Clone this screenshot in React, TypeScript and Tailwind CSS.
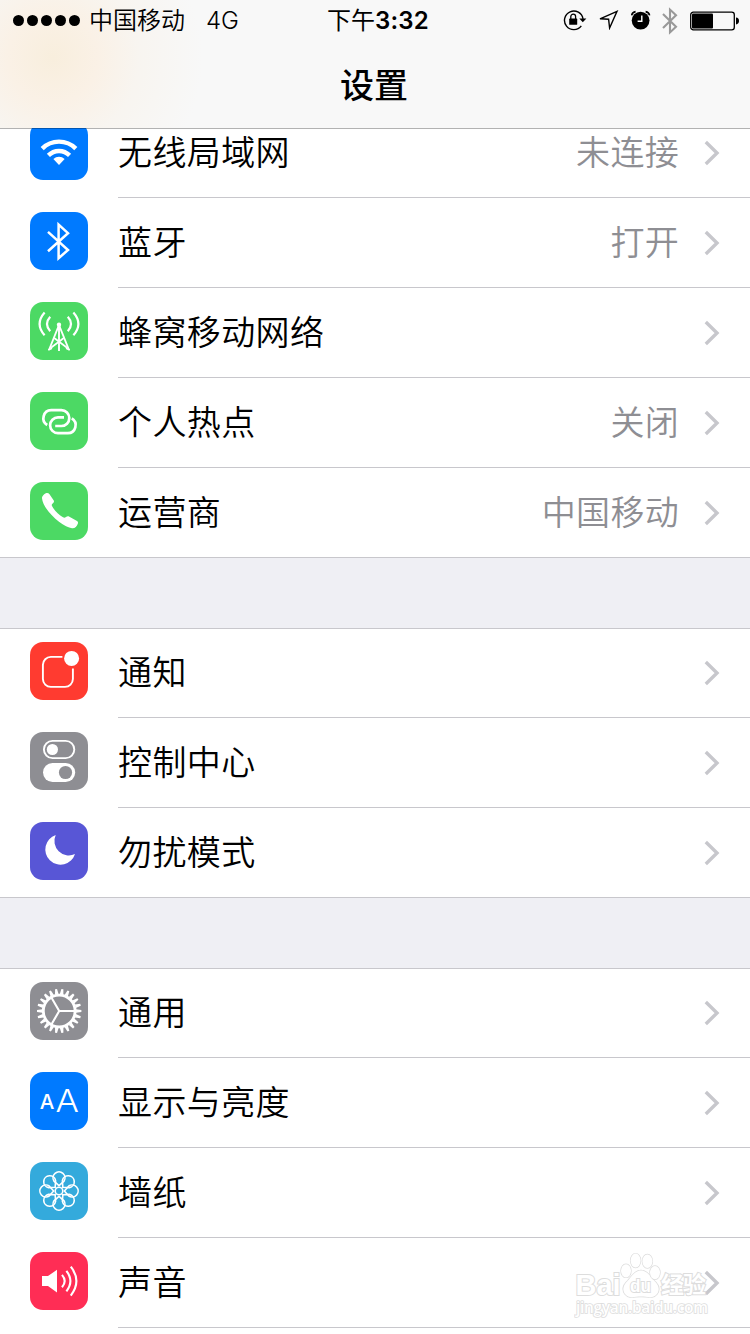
import React from 'react';

const FONT = 'font-["Inter","Noto_Sans_CJK_SC",sans-serif]';

type Row = {
  label: string;
  value?: string;
  color: string;
  icon: React.ReactNode;
};

const WifiIcon = (
  <g fill="none" stroke="#fff" strokeWidth="4.4">
    <path d="M12.2 26.6A23.8 23.8 0 0 1 45.8 26.6" />
    <path d="M18.4 33.4A14.8 14.8 0 0 1 39.6 33.4" />
    <path d="M29 43L23.4 37A8.4 8.4 0 0 1 34.6 37Z" fill="#fff" stroke="none" />
  </g>
);

const BluetoothIcon = (
  <path d="M18 19.8L38 38L28.6 46.2V12.6L38 21.2L18 39.2" fill="none" stroke="#fff" strokeWidth="2.5" />
);

const CellularIcon = (
  <g fill="none" stroke="#fff" strokeWidth="1.9">
    <circle cx="29" cy="22.8" r="2.2" fill="#fff" stroke="none" />
    <path d="M20.2 14.8Q13.8 22 20.2 29.2M37.8 14.8Q44.2 22 37.8 29.2" strokeWidth="2.2" />
    <path d="M14.6 10.4Q4.6 21.8 14.6 33.2M43.4 10.4Q53.4 21.8 43.4 33.2" strokeWidth="2.2" />
    <path d="M29 23V49M28.6 24L19 48M29.4 24L39 48" />
    <path d="M24.2 36L37.4 46M33.8 36L20.6 46M18.2 48L22 46.2M39.8 48L36 46.2" strokeWidth="1.7" />
  </g>
);

const HotspotIcon = (
  <g fill="none" stroke="#fff" strokeWidth="2.7">
    <path d="M17.2 33A8 8 0 0 1 21.2 18.2H31.4A7.9 7.9 0 0 1 31.4 34H25.2" />
    <path d="M34 25.4H28A7.9 7.9 0 0 0 28 41.2H37.8A8 8 0 0 0 41.8 26.4" />
  </g>
);

const PhoneIcon = (
  <path
    d="M12 16.2C12 14 14.5 11.3 16.6 11C17.8 10.8 18.8 11.2 19.5 12.2L23.6 18.2C24.3 19.3 24 20.2 23.2 21C22.2 22 21.3 22.6 22 24C24.2 28.4 28.8 32.8 33 35.3C34.3 36.1 35 35.7 36 35C37 34.2 38.1 33.9 39.4 34.7L46.6 38.7C47.9 39.4 48.3 40.3 47.8 41.7C46.9 44.4 44.8 46.5 42 46.2C33.4 45.6 13 28.4 12 16.2Z"
    fill="#fff"
  />
);

const NotificationIcon = (
  <>
    <path d="M32.4 14.9H20.8A8 8 0 0 0 12.9 22.8V37A8 8 0 0 0 20.8 44.9H35A8 8 0 0 0 42.9 37V26.4" fill="none" stroke="#fff" strokeWidth="1.9" />
    <circle cx="41.6" cy="16.4" r="7.5" fill="#fff" />
  </>
);

const ControlIcon = (
  <>
    <rect x="13.9" y="8.9" width="30.4" height="17.2" rx="8.6" fill="none" stroke="#fff" strokeWidth="1.9" />
    <circle cx="22.4" cy="17.5" r="5.6" fill="#fff" />
    <rect x="13" y="31" width="32.2" height="19" rx="9.5" fill="#fff" />
    <circle cx="35.5" cy="40.5" r="6.6" fill="#8e8e93" />
  </>
);

const MoonIcon = <path d="M25.7 13A15.2 15.2 0 1 0 45 32A14.4 14.4 0 0 1 25.7 13Z" fill="#fff" />;

const TEETH = Array.from({ length: 22 }, (_, i) => 90 + (i * 360) / 22);

const GearIcon = (
  <g transform="translate(29.2 29)" fill="none" stroke="#fff">
    <circle r="15.9" strokeWidth="2.8" />
    {TEETH.map((a) => (
      <path key={a} d="M-1.8 -16.8L-1 -22.2H1L1.8 -16.8Z" fill="#fff" stroke="none" transform={`rotate(${a})`} />
    ))}
    <path d="M0 0H15M0 0L-7.8 -13.5M0 0L-7.8 13.5" strokeWidth="2.1" />
  </g>
);

const DisplayIcon = (
  <g fill="#fff" className='font-["Inter",sans-serif]'>
    <text x="9.8" y="36.8" fontSize="20.4" fontWeight="500" textLength="14.6" lengthAdjust="spacingAndGlyphs">A</text>
    <text x="25.6" y="39.8" fontSize="31" fontWeight="350" textLength="23.4" lengthAdjust="spacingAndGlyphs">A</text>
  </g>
);

const PETALS = [0, 45, 90, 135, 180, 225, 270, 315];

const WallpaperIcon = (
  <g transform="translate(29 29)" fill="none" stroke="#fff" strokeWidth="1.6">
    <circle r="3.8" />
    {PETALS.map((a) => (
      <path key={a} d="M0 -5.4L-5 -9.8A6 6 0 1 1 5 -9.8Z" transform={`rotate(${a})`} />
    ))}
  </g>
);

const SoundIcon = (
  <>
    <path d="M12 24H18L27 17.8V40.4L18 34H12Z" fill="#fff" />
    <path d="M32 22.9Q37.4 29.1 32 35.3M36.4 18.8Q44.4 29.1 36.4 39.4M40.8 14.6Q52 29.1 40.8 43.6" fill="none" stroke="#fff" strokeWidth="2.1" />
  </>
);

const groups: Row[][] = [
  [
    { label: '无线局域网', value: '未连接', color: 'bg-[#007aff]', icon: WifiIcon },
    { label: '蓝牙', value: '打开', color: 'bg-[#007aff]', icon: BluetoothIcon },
    { label: '蜂窝移动网络', color: 'bg-[#4cd964]', icon: CellularIcon },
    { label: '个人热点', value: '关闭', color: 'bg-[#4cd964]', icon: HotspotIcon },
    { label: '运营商', value: '中国移动', color: 'bg-[#4cd964]', icon: PhoneIcon },
  ],
  [
    { label: '通知', color: 'bg-[#ff3b30]', icon: NotificationIcon },
    { label: '控制中心', color: 'bg-[#8e8e93]', icon: ControlIcon },
    { label: '勿扰模式', color: 'bg-[#5856d6]', icon: MoonIcon },
  ],
  [
    { label: '通用', color: 'bg-[#8e8e93]', icon: GearIcon },
    { label: '显示与亮度', color: 'bg-[#007aff]', icon: DisplayIcon },
    { label: '墙纸', color: 'bg-[#34aadc]', icon: WallpaperIcon },
    { label: '声音', color: 'bg-[#ff2d55]', icon: SoundIcon },
  ],
];

function SettingsRow({ row, last }: { row: Row; last: boolean }) {
  return (
    <div className="flex h-[90px] pl-[30px]">
      <div className={`mt-[14px] mr-[30px] h-[58px] w-[58px] shrink-0 overflow-hidden rounded-[13px] ${row.color}`}>
        <svg viewBox="0 0 58 58" className="h-full w-full">{row.icon}</svg>
      </div>
      <div className={`flex flex-1 items-center border-b pr-[30px] ${last ? 'border-transparent' : 'border-[#c8c7cc]'}`}>
        <span className="flex-1 text-[34px] font-[350] leading-[48px] tracking-[0.4px] text-black">{row.label}</span>
        {row.value && <span className="mr-[25px] text-[34px] font-[350] leading-[48px] tracking-[0.3px] text-[#8e8e93]">{row.value}</span>}
        <svg viewBox="0 0 16 26" className="h-[26px] w-[16px]">
          <path d="M1.8 2L13 13L1.8 24" fill="none" stroke="#c7c7cc" strokeWidth="3.4" />
        </svg>
      </div>
    </div>
  );
}

function StatusBar() {
  return (
    <div className="grid h-[40px] grid-cols-[1fr_auto_1fr] items-center pl-[13px] pr-[11px] text-[24px] leading-[40px] text-black">
      <div className="flex items-center">
        <div className="flex gap-[3px]">
          {[0, 1, 2, 3, 4].map((i) => (
            <span key={i} className="h-[11px] w-[11px] rounded-full bg-black" />
          ))}
        </div>
        <span className="ml-[9px] mt-px font-[350]">中国移动</span>
        <span className="ml-[21px] mt-px font-[350]">4G</span>
      </div>
      <div className="ml-[4px] mt-px font-normal">
        下午<span className="font-semibold tracking-[0.2px]">3:32</span>
      </div>
      <div className="-mt-px flex items-center justify-end">
        <svg viewBox="0 0 24 22" className="mr-[12px] h-[22px] w-[24px]">
          <path d="M18.3 16.8A9.3 9.3 0 1 1 20 10" fill="none" stroke="#000" strokeWidth="1.4" />
          <path d="M16.3 9.6H23.4L19.8 13.2Z" />
          <rect x="6.2" y="9.6" width="8" height="6.2" rx="0.6" />
          <path d="M7.8 10V7.6A2.4 2.4 0 0 1 12.6 7.6V10" fill="none" stroke="#000" strokeWidth="1.3" />
        </svg>
        <svg viewBox="0 0 20 20" className="mr-[12px] h-[20px] w-[20px]">
          <path d="M18 1.4L1 8.8L9.6 9.2L10.6 18Z" fill="none" stroke="#000" strokeWidth="1.4" />
        </svg>
        <svg viewBox="0 0 20 20" className="mr-[11px] h-[20px] w-[20px]">
          <circle cx="9.6" cy="10.6" r="8.9" />
          <path d="M10.8 5.6V11.2H6.6" fill="none" stroke="#fff" strokeWidth="1.4" />
          <path d="M0.6 5.4Q1.2 2.2 4.6 1.6M18.6 5.4Q18 2.2 14.6 1.6" fill="none" stroke="#000" strokeWidth="1.6" />
        </svg>
        <svg viewBox="0 0 16 28" className="mr-[12px] mt-[1px] h-[28px] w-[16px]">
          <path d="M1 7L14 19.8L8 25.4V2.6L14 8.2L1 21" fill="none" stroke="#999" strokeWidth="2.1" />
        </svg>
        <svg viewBox="0 0 49 20" className="mt-px h-[20px] w-[49px]">
          <rect x="0.7" y="1.2" width="43.6" height="17.6" rx="2.6" fill="none" stroke="#000" strokeWidth="1.3" />
          <rect x="2" y="2.6" width="21" height="14.8" rx="1" />
          <path d="M46 6.6Q49 7 49 10Q49 13 46 13.4Z" />
        </svg>
      </div>
    </div>
  );
}

function Watermark() {
  return (
    <svg viewBox="0 0 140 68" className="absolute left-[574px] top-[1250px] h-[68px] w-[140px] opacity-90">
      <g fill="#fff" stroke="#dadada" strokeWidth="2" paintOrder="stroke">
        <text x="1.5" y="45" fontSize="29" fontWeight="700" textLength="45" className='font-["Liberation_Sans",sans-serif]'>Bai</text>
        <g strokeWidth="1.4">
          <path d="M67 20.5C73 20.5 76 26 80 30.5C85 35 86 40 83 44C79 49 74 46.5 67 46.5C60 46.5 55 49 51 44C48 40 49 35 54 30.5C58 26 61 20.5 67 20.5Z" />
          <ellipse cx="52" cy="20.8" rx="5" ry="6.6" />
          <ellipse cx="61.6" cy="10.6" rx="5" ry="7" />
          <ellipse cx="73.4" cy="11.2" rx="5" ry="6.8" />
          <ellipse cx="81" cy="22.6" rx="5" ry="6.6" />
        </g>
        <text x="56" y="42" fontSize="19" fontWeight="700" textLength="21" lengthAdjust="spacingAndGlyphs" className='font-["Liberation_Sans",sans-serif]'>du</text>
        <text x="87" y="43" fontSize="23" fontWeight="700" textLength="45" className='font-["Noto_Sans_CJK_SC",sans-serif]'>经验</text>
        <text x="2" y="62.5" fontSize="15.5" fontWeight="600" strokeWidth="1.6" textLength="132" className='font-["Open_Sans",sans-serif]'>jingyan.baidu.com</text>
      </g>
    </svg>
  );
}

export default function App() {
  return (
    <div className={`relative h-[1334px] w-[750px] overflow-hidden bg-white ${FONT}`}>
      <header className="relative z-10 h-[128px] bg-[#f8f8f8] bg-[radial-gradient(circle_at_53px_58px,#f8eedd_0px,#faf1e6_45px,rgba(248,244,238,0.8)_85px,rgba(246,246,246,0)_150px)] shadow-[0_1px_0_rgba(0,0,0,0.3)]">
        <StatusBar />
        <h1 className="mt-[22px] text-center text-[34px] font-medium leading-[48px] text-black">
          <span className="-ml-[2px]">设置</span>
        </h1>
      </header>

      {/* the list is scrolled a little way under the header */}
      <main className="-mt-[20px]">
        {groups.map((rows, i) => (
          <React.Fragment key={i}>
            {i > 0 && <div className="-mt-px h-[72px] border-y border-[#c8c7cc] bg-[#efeff4]" />}
            <section className={i > 0 ? '-mt-px' : ''}>
              {rows.map((row, j) => (
                <SettingsRow key={row.label} row={row} last={i < 2 && j === rows.length - 1} />
              ))}
            </section>
          </React.Fragment>
        ))}
      </main>

      <Watermark />
    </div>
  );
}
